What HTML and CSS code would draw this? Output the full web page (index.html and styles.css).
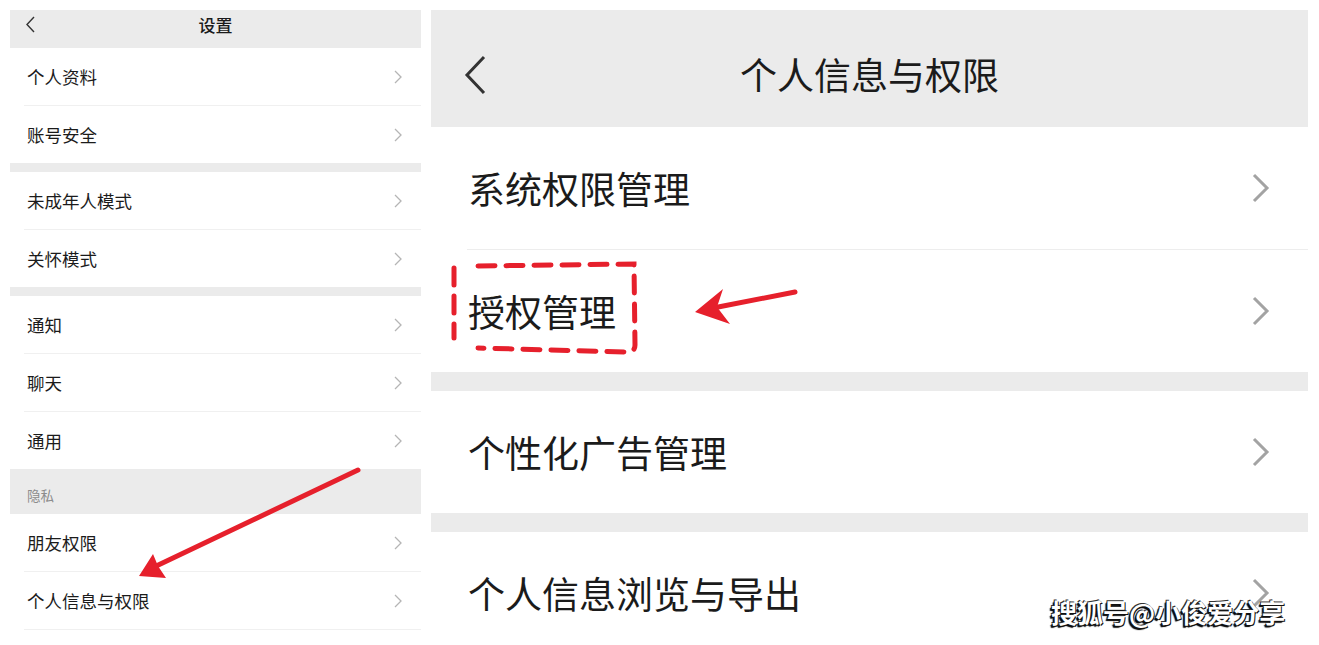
FILE: index.html
```html
<!DOCTYPE html>
<html lang="zh-CN">
<head>
    <meta charset="UTF-8">
    <meta name="viewport" content="width=device-width, initial-scale=1.0">
    <title>个人信息与权限</title>
    <link rel="stylesheet" href="styles.css">
</head>
<body>
<div class="screen">
    <section class="panel panel-small">
        <header class="bar">
            <svg class="back" width="10" height="17" viewBox="0 0 10 17"><path d="M9 1 L2 8.5 L9 16" fill="none" stroke="#333" stroke-width="1.4"/></svg>
            <h1>设置</h1>
            <span></span>
        </header>
        <div class="row sep"><span>个人资料</span><svg class="more" width="8" height="14" viewBox="0 0 8 14"><path d="M1 1 L7 7 L1 13" fill="none" stroke="#b5b5b5" stroke-width="1.3"/></svg></div>
        <div class="row"><span>账号安全</span><svg class="more" width="8" height="14" viewBox="0 0 8 14"><path d="M1 1 L7 7 L1 13" fill="none" stroke="#b5b5b5" stroke-width="1.3"/></svg></div>
        <div class="gap"></div>
        <div class="row sep"><span>未成年人模式</span><svg class="more" width="8" height="14" viewBox="0 0 8 14"><path d="M1 1 L7 7 L1 13" fill="none" stroke="#b5b5b5" stroke-width="1.3"/></svg></div>
        <div class="row"><span>关怀模式</span><svg class="more" width="8" height="14" viewBox="0 0 8 14"><path d="M1 1 L7 7 L1 13" fill="none" stroke="#b5b5b5" stroke-width="1.3"/></svg></div>
        <div class="gap"></div>
        <div class="row sep"><span>通知</span><svg class="more" width="8" height="14" viewBox="0 0 8 14"><path d="M1 1 L7 7 L1 13" fill="none" stroke="#b5b5b5" stroke-width="1.3"/></svg></div>
        <div class="row sep"><span>聊天</span><svg class="more" width="8" height="14" viewBox="0 0 8 14"><path d="M1 1 L7 7 L1 13" fill="none" stroke="#b5b5b5" stroke-width="1.3"/></svg></div>
        <div class="row"><span>通用</span><svg class="more" width="8" height="14" viewBox="0 0 8 14"><path d="M1 1 L7 7 L1 13" fill="none" stroke="#b5b5b5" stroke-width="1.3"/></svg></div>
        <div class="section-label">隐私</div>
        <div class="row sep"><span>朋友权限</span><svg class="more" width="8" height="14" viewBox="0 0 8 14"><path d="M1 1 L7 7 L1 13" fill="none" stroke="#b5b5b5" stroke-width="1.3"/></svg></div>
        <div class="row sep"><span>个人信息与权限</span><svg class="more" width="8" height="14" viewBox="0 0 8 14"><path d="M1 1 L7 7 L1 13" fill="none" stroke="#b5b5b5" stroke-width="1.3"/></svg></div>
    </section>

    <section class="panel panel-large">
        <header class="bar">
            <svg class="back" width="24" height="40" viewBox="0 0 24 40"><path d="M21 2 L4 20 L21 38" fill="none" stroke="#333" stroke-width="3"/></svg>
            <h1>个人信息与权限</h1>
            <span></span>
        </header>
        <div class="row sep"><span>系统权限管理</span><svg class="more" width="18" height="30" viewBox="0 0 18 30"><path d="M2 2 L15 15 L2 28" fill="none" stroke="#a3a3a3" stroke-width="3"/></svg></div>
        <div class="row"><span>授权管理</span><svg class="more" width="18" height="30" viewBox="0 0 18 30"><path d="M2 2 L15 15 L2 28" fill="none" stroke="#a3a3a3" stroke-width="3"/></svg></div>
        <div class="gap"></div>
        <div class="row"><span>个性化广告管理</span><svg class="more" width="18" height="30" viewBox="0 0 18 30"><path d="M2 2 L15 15 L2 28" fill="none" stroke="#a3a3a3" stroke-width="3"/></svg></div>
        <div class="gap"></div>
        <div class="row"><span>个人信息浏览与导出</span><svg class="more" width="18" height="30" viewBox="0 0 18 30"><path d="M2 2 L15 15 L2 28" fill="none" stroke="#a3a3a3" stroke-width="3"/></svg></div>
    </section>
</div>

<!-- red annotations drawn over the screenshots -->
<svg class="marks" width="1319" height="645" viewBox="0 0 1319 645">
    <g fill="none" stroke="#e6202c" stroke-width="5" stroke-linecap="round">
        <path d="M358 470 L152 568"/>
        <path d="M795 292 L708 309"/>
        <path d="M478 266 L634 264 L635 345 Q635 352 627 352 L478 348" stroke-dasharray="17 11"/>
        <path d="M454 268 L454 338" stroke-dasharray="17 11"/>
    </g>
    <g fill="#e6202c">
        <path d="M139 576 L153 554 L158 566 L166 578 Z"/>
        <path d="M695 312 L723 289 L717 307 L730 324 Z"/>
    </g>
</svg>

<div class="watermark">搜狐号@小俊爱分享</div>
</body>
</html>
```

FILE: styles.css
```css
body {
    margin: 0;
    background-color: #fff;
    color: #1b1b1b;
    font-family: "Noto Sans CJK SC", "Noto Sans", sans-serif;
    width: 1319px;
    height: 645px;
    overflow: hidden;
    position: relative;
}
.screen {
    display: flex;
    gap: 10px;
    padding: 10px 0 0 10px;
}
.panel {
    display: flex;
    flex-direction: column;
    background-color: #fff;
}
.panel-small {
    width: 411px;
}
.panel-large {
    width: 877px;
}
.bar {
    display: grid;
    grid-template-columns: 1fr auto 1fr;
    align-items: center;
    background-color: #ebebeb;
}
.bar h1 {
    margin: 0;
    font-weight: 500;
    line-height: 1;
}
.panel-small .bar {
    height: 38px;
    padding: 0 15px 9px 15px;
    box-sizing: border-box;
}
.panel-small .bar h1 {
    font-size: 17px;
}
.panel-large .bar {
    height: 117px;
    padding: 12px 32px 0 32px;
    box-sizing: border-box;
}
.panel-large .bar h1 {
    font-size: 37px;
    font-weight: 400;
}
.row {
    display: flex;
    align-items: center;
    justify-content: space-between;
    flex-shrink: 0;
}
.panel-small .row {
    height: 57px;
    margin-left: 14px;
    padding: 0 19px 0 3px;
    font-size: 17.5px;
}
.panel-large .row {
    height: 122px;
    margin-left: 36px;
    padding: 0 38px 0 1px;
    font-size: 37px;
}
.panel-small .row.sep {
    border-bottom: 1px solid #f0f0f0;
}
.panel-large .row.sep {
    border-bottom: 1px solid #ededed;
}
.gap {
    background-color: #ebebeb;
    flex-shrink: 0;
}
.panel-small .gap {
    height: 9px;
}
.panel-large .gap {
    height: 19px;
}
.section-label {
    height: 45px;
    padding: 7px 0 0 17px;
    box-sizing: border-box;
    display: flex;
    align-items: center;
    background-color: #ebebeb;
    color: #8c8c8c;
    font-size: 13.5px;
}
.marks {
    position: absolute;
    left: 0;
    top: 0;
    pointer-events: none;
}
.watermark {
    position: absolute;
    left: 1051px;
    top: 599px;
    font-size: 26px;
    font-weight: 700;
    line-height: 1;
    color: #fff;
    text-shadow: -1px 1px 0 #111, 1px 1px 0 #111, -1px -1px 0 #333, -2px 2px 1px #000;
}
```
